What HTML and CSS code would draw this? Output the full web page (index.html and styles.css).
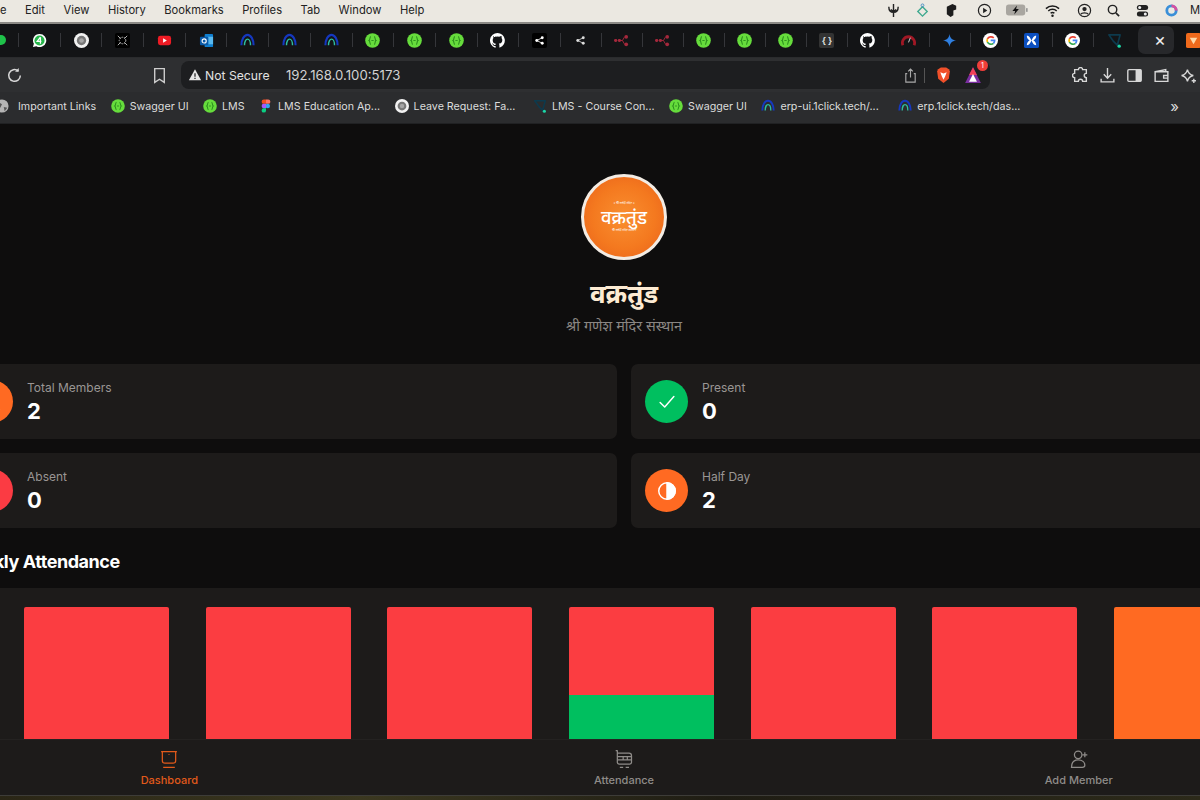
FILE: index.html
```html
<!DOCTYPE html>
<html lang="mr">
<head>
<meta charset="utf-8">
<title>वक्रतुंड</title>
<link rel="stylesheet" href="styles.css">
</head>
<body>
<svg class="defs" width="0" height="0" aria-hidden="true">
  <symbol id="swagger" viewBox="0 0 16 16"><circle cx="8" cy="8" r="7.800" fill="#66dc3c"/><path d="M6.300 3.800C4.700 4.100 5.700 7.300 4.300 8c1.400.7.400 3.900 2 4.200M9.700 3.800c1.600.3.600 3.500 2 4.200-1.400.7-.4 3.900-2 4.200" fill="none" stroke="#2c8f1e" stroke-width="1.200"/><path d="M6.800 8h2.400" stroke="#2c8f1e"/></symbol>
  <symbol id="arc" viewBox="0 0 16 16"><path d="M1.500 13A6.500 11 0 0 1 14.500 13" fill="none" stroke="#1538c0" stroke-width="2.200"/><path d="M4.800 13A3.200 6.500 0 0 1 11.200 13" fill="none" stroke="#2fc0a0" stroke-width="1.500"/></symbol>
  <symbol id="github" viewBox="0 0 16 16"><path fill="#fff" d="M8 0a8 8 0 0 0-2.500 15.600c.4.100.5-.2.500-.4v-1.400c-2.200.5-2.700-1-2.700-1-.4-.9-.9-1.200-.9-1.200-.7-.5.100-.5.100-.5.800.100 1.200.8 1.200.8.700 1.200 1.900.9 2.300.7.100-.5.300-.9.500-1.100-1.800-.2-3.600-.9-3.600-4 0-.9.300-1.600.8-2.100-.1-.2-.4-1 .100-2.100 0 0 .7-.2 2.200.8a7.600 7.600 0 0 1 4 0c1.500-1 2.200-.8 2.200-.8.400 1.100.2 1.900.100 2.100.5.600.8 1.300.8 2.100 0 3.100-1.900 3.700-3.700 3.900.3.300.6.800.6 1.500v2.200c0 .2.100.5.600.4A8 8 0 0 0 8 0z"/></symbol>
  <symbol id="google" viewBox="0 0 16 16"><circle cx="8" cy="8" r="8" fill="#fff"/><path d="M11.500 5.200a4.400 4.400 0 0 0-6.800 1.100" fill="none" stroke="#ea4335" stroke-width="1.800"/><path d="M4.700 6.300a4.400 4.400 0 0 0 0 3.400" fill="none" stroke="#fbbc05" stroke-width="1.800"/><path d="M4.700 9.700a4.400 4.400 0 0 0 6.500 1.400" fill="none" stroke="#34a853" stroke-width="1.800"/><path d="M11.200 11.100A4.400 4.400 0 0 0 12.400 7.800H8.200" fill="none" stroke="#4285f4" stroke-width="1.800"/></symbol>
  <symbol id="share" viewBox="0 0 16 16"><circle cx="4" cy="8" r="2.100"/><circle cx="12" cy="4" r="2.100"/><circle cx="12" cy="12" r="2.100"/><path d="M4 8l8-4M4 8l8 4" stroke="currentColor" stroke-width="1.200" fill="none"/></symbol>
  <symbol id="flow" viewBox="0 0 16 16"><rect x="0" y="6.500" width="3.500" height="3" rx="1.500"/><rect x="4" y="6.500" width="3.500" height="3" rx="1.500"/><path d="M7 8h2l2-3.500M9 8l2 3.500" stroke="currentColor" fill="none"/><circle cx="13" cy="4" r="2"/><circle cx="13" cy="12" r="2"/></symbol>
  <symbol id="gear" viewBox="0 0 16 16"><circle cx="8" cy="8" r="8" fill="#f2f2f2"/><circle cx="8" cy="8" r="5" fill="#777"/><circle cx="8" cy="8" r="2.500" fill="#a5a5a5"/></symbol>
  <symbol id="plan" viewBox="0 0 16 16"><path d="M2 2h12l-3 11-4-4z" fill="none" stroke="#0d3a4d" stroke-width="1.800" stroke-linejoin="round"/><circle cx="13" cy="14" r="1.800" fill="#1cd6a6"/></symbol>
</svg>

<header class="menubar">
  <nav class="menu-left">
    <span class="menu-file">File</span><span>Edit</span><span>View</span><span>History</span><span>Bookmarks</span><span>Profiles</span><span>Tab</span><span>Window</span><span>Help</span>
  </nav>
  <div class="menu-right">
    <svg class="mi" viewBox="0 0 16 16"><path d="M8 1v14M3 4c0 4 2 6 5 6s5-2 5-6M5 7l3 2 3-2" fill="none" stroke="#222" stroke-width="1.500"/></svg>
    <svg class="mi" viewBox="0 0 16 16"><path d="M8 4l5 5-5 5-5-5z" fill="none" stroke="#3fa98f" stroke-width="1.500"/><circle cx="8" cy="2.500" r="1.500" fill="none" stroke="#4b8fc4"/></svg>
    <svg class="mi" viewBox="0 0 16 16"><path d="M3 4l6-3 4 2v4l-3 1v5l-3 2-4-3z" fill="#1d1d1d"/></svg>
    <svg class="mi mi-gap" viewBox="0 0 16 16"><circle cx="8" cy="8" r="6.500" fill="none" stroke="#222" stroke-width="1.300"/><path d="M6.500 5v6l4.500-3z" fill="#222"/></svg>
    <svg class="mi batt" viewBox="0 0 24 12"><rect width="21" height="12" rx="3" fill="#a9a6a0"/><path d="M12 1L7 7h3l-1 4 5-6h-3z" fill="#111"/><rect x="22" y="4" width="1.500" height="4" fill="#888"/></svg>
    <svg class="mi mi-wifi" viewBox="0 0 16 16"><path d="M1 6a10 10 0 0 1 14 0M3.500 8.500a6.500 6.500 0 0 1 9 0M6 11a3 3 0 0 1 4 0" fill="none" stroke="#1a1a1a" stroke-width="1.600"/><circle cx="8" cy="13.500" r="1.300" fill="#1a1a1a"/></svg>
    <svg class="mi" viewBox="0 0 16 16"><circle cx="8" cy="8" r="6.500" fill="none" stroke="#222" stroke-width="1.300"/><circle cx="8" cy="6.500" r="2.300" fill="#222"/><path d="M4 12c1-2 7-2 8 0" stroke="#222" fill="none" stroke-width="1.500"/></svg>
    <svg class="mi" viewBox="0 0 16 16"><circle cx="7" cy="7" r="4.500" fill="none" stroke="#222" stroke-width="1.500"/><path d="M10.500 10.500L14 14" stroke="#222" stroke-width="1.800"/></svg>
    <svg class="mi" viewBox="0 0 16 16"><rect x="2" y="2" width="12" height="5.500" rx="2.700" fill="#222"/><rect x="2" y="9" width="12" height="5.500" rx="2.700" fill="#222"/><circle cx="5" cy="4.700" r="1.600" fill="#eee"/><circle cx="11" cy="11.700" r="1.600" fill="#eee"/></svg>
    <svg class="mi" viewBox="0 0 16 16"><circle cx="8" cy="8" r="5" fill="none" stroke="#3a8fd8" stroke-width="3"/><path d="M8 3a5 5 0 0 1 5 5" fill="none" stroke="#d84fa0" stroke-width="3"/></svg>
    <span class="menu-m">M</span>
  </div>
</header>

<div class="tabstrip">
  <div class="tab tab-first"><span class="green-dot"></span></div>
  <div class="tab"><svg class="fav" viewBox="0 0 16 16"><path d="M8 1a7 7 0 0 0-6 10.500L1 15l3.600-1A7 7 0 1 0 8 1z" fill="#fff"/><circle cx="8" cy="8" r="5.400" fill="#26b64b"/><path d="M9 4.500L5.500 9H10M9 4.500V11.500" stroke="#fff" fill="none" stroke-width="1.300"/></svg></div>
  <div class="tab"><svg class="fav"><use href="#gear"/></svg></div>
  <div class="tab"><svg class="fav" viewBox="0 0 16 16"><rect width="16" height="16" rx="2" fill="#000"/><circle cx="8" cy="8" r="3.500" fill="none" stroke="#ccc" stroke-dasharray="1.500 1"/><path d="M3 3l3 3M13 3l-3 3M3 13l3-3M13 13l-3-3" stroke="#bbb"/></svg></div>
  <div class="tab"><svg class="fav" viewBox="0 0 16 16"><rect x="1" y="3" width="14" height="10" rx="2.500" fill="#ee1b24"/><path d="M6.500 5.700v4.600L10.500 8z" fill="#fff"/></svg></div>
  <div class="tab"><svg class="fav" viewBox="0 0 16 16"><rect x="6" y="1" width="9" height="14" rx="1" fill="#0f7fd0"/><rect x="9" y="4" width="6" height="8" fill="#58b9f0"/><rect x="1" y="4" width="9" height="9" rx="1" fill="#0a5aa8"/><circle cx="5.500" cy="8.500" r="2.200" fill="none" stroke="#fff" stroke-width="1.200"/></svg></div>
  <div class="tab"><svg class="fav"><use href="#arc"/></svg></div>
  <div class="tab"><svg class="fav"><use href="#arc"/></svg></div>
  <div class="tab"><svg class="fav"><use href="#arc"/></svg></div>
  <div class="tab"><svg class="fav"><use href="#swagger"/></svg></div>
  <div class="tab"><svg class="fav"><use href="#swagger"/></svg></div>
  <div class="tab"><svg class="fav"><use href="#swagger"/></svg></div>
  <div class="tab"><svg class="fav"><use href="#github"/></svg></div>
  <div class="tab"><svg class="fav sq-black"><use href="#share"/></svg></div>
  <div class="tab tab-n"><svg class="fav white small"><use href="#share"/></svg></div>
  <div class="tab tab-n"><svg class="fav red"><use href="#flow"/></svg></div>
  <div class="tab tab-n"><svg class="fav red"><use href="#flow"/></svg></div>
  <div class="tab tab-n"><svg class="fav"><use href="#swagger"/></svg></div>
  <div class="tab tab-n"><svg class="fav"><use href="#swagger"/></svg></div>
  <div class="tab tab-n"><svg class="fav"><use href="#swagger"/></svg></div>
  <div class="tab tab-n"><span class="braces">{ }</span></div>
  <div class="tab tab-n"><svg class="fav"><use href="#github"/></svg></div>
  <div class="tab tab-n"><svg class="fav" viewBox="0 0 16 16"><path d="M2 13a6.500 6.500 0 1 1 12 0" fill="none" stroke="#a01825" stroke-width="3"/><path d="M8 10l2-5" stroke="#d9d9d9"/></svg></div>
  <div class="tab tab-n"><svg class="fav" viewBox="0 0 16 16"><path d="M8 1c.5 4 2.500 6.500 7 7-4.500.5-6.500 3-7 7-.5-4-2.500-6.500-7-7 4.500-.5 6.500-3 7-7z" fill="#2f7fe0"/></svg></div>
  <div class="tab tab-n"><svg class="fav"><use href="#google"/></svg></div>
  <div class="tab tab-n"><svg class="fav" viewBox="0 0 16 16"><rect width="16" height="16" rx="2" fill="#0b4fc0"/><path d="M3 3c3 0 4 3 5 5 1-2 2-5 5-5 0 2-1 4-3 5 2 1 3 3 3 5-3 0-4-3-5-5-1 2-2 5-5 5 0-2 1-4 3-5-2-1-3-3-3-5z" fill="#fff"/></svg></div>
  <div class="tab tab-n"><svg class="fav"><use href="#google"/></svg></div>
  <div class="tab tab-n tab-plain"><svg class="fav"><use href="#plan"/></svg></div>
  <div class="tab-active">×</div>
  <div class="tab tab-n tab-plain tab-last"><svg class="fav" viewBox="0 0 16 16"><rect width="16" height="16" rx="2" fill="#f06a1c"/><path d="M4 5h8l-4 7z" fill="#ffd9a8"/></svg></div>
</div>

<div class="toolbar">
  <svg class="tool reload" viewBox="0 0 16 16"><path d="M13.500 8a5.500 5.500 0 1 1-2-4.300" fill="none" stroke="#d8d8d8" stroke-width="1.400"/><path d="M12 1v3.500H8.500z" fill="#d8d8d8"/></svg>
  <svg class="tool bookmark" viewBox="0 0 16 16"><path d="M3.500 1.500h9v13L8 11.500l-4.500 3z" fill="none" stroke="#cfcfcf" stroke-width="1.300"/></svg>
  <div class="address">
    <svg class="warn" viewBox="0 0 16 16"><path d="M8 1.500l7 12.500H1z" fill="#e6e6e6"/><path d="M8 6v4M8 11.200v1.300" stroke="#1e1f21" stroke-width="1.400"/></svg>
    <span class="not-secure">Not Secure</span>
    <span class="url">192.168.0.100:5173</span>
    <svg class="addr-ic share-ic" viewBox="0 0 16 16"><path d="M4.500 6H3v9h10V6h-1.500M8 10V1M5.500 3.500L8 1l2.500 2.500" fill="none" stroke="#a9a9a9" stroke-width="1.200"/></svg>
    <span class="addr-sep"></span>
    <svg class="addr-ic brave" viewBox="0 0 16 16"><path d="M3 2l2.500-1.500h5L13 2l1 2-1 7-5 4-5-4-1-7z" fill="#f0502a"/><path d="M5 5l3 1 3-1-1.500 4L8 12 6.500 9z" fill="#fff"/></svg>
    <span class="rewards">
      <svg class="addr-ic reward-ic" viewBox="0 0 16 16"><path d="M8 1l7 14H1z" fill="#7a2ea0"/><path d="M8 1l3.500 7h-7z" fill="#f0405a"/><path d="M8 7l3.500 7h-7z" fill="#fff"/></svg>
      <span class="badge">1</span>
    </span>
  </div>
  <div class="tool-right">
    <svg class="tool" viewBox="0 0 16 16"><path d="M6 2.500a2 2 0 0 1 4 0h3.500V6a2 2 0 0 0 0 4v3.500H10a2 2 0 0 0-4 0H2.500V10a2 2 0 0 1 0-4V2.500z" fill="none" stroke="#d8d8d8" stroke-width="1.300"/></svg>
    <svg class="tool" viewBox="0 0 16 16"><path d="M8 1v9M4.500 6.800L8 10.500l3.500-3.700M2 11v3h12v-3" fill="none" stroke="#d8d8d8" stroke-width="1.300"/></svg>
    <svg class="tool" viewBox="0 0 16 16"><rect x="1.700" y="2.500" width="12.600" height="11" rx="1" fill="none" stroke="#d8d8d8" stroke-width="1.300"/><rect x="9" y="2.500" width="5.300" height="11" fill="#d8d8d8"/></svg>
    <svg class="tool" viewBox="0 0 16 16"><path d="M2 4.500l10-2v2M2 4.500h12v9H2zM10 8h4v2.500h-4z" fill="none" stroke="#d8d8d8" stroke-width="1.300"/></svg>
    <svg class="tool" viewBox="0 0 16 16"><path d="M7 2.500c.7 3.200 2.200 4.800 5.500 5.500-3.300.7-4.800 2.300-5.500 5.500C6.300 10.300 4.800 8.700 1.500 8 4.800 7.300 6.300 5.700 7 2.500zM13 11v4M11 13h4" fill="none" stroke="#d8d8d8" stroke-width="1.300"/></svg>
  </div>
</div>

<div class="bookmarks">
  <div class="bm bm-globe"><svg class="bm-ic" viewBox="0 0 16 16"><circle cx="8" cy="8" r="7.500" fill="#b5b5b5"/><path d="M3 3l5 3-2 4-3-1zM10 9l4 1-3 4z" fill="#555"/></svg>Important Links</div>
  <div class="bm"><svg class="bm-ic"><use href="#swagger"/></svg>Swagger UI</div>
  <div class="bm"><svg class="bm-ic"><use href="#swagger"/></svg>LMS</div>
  <div class="bm"><svg class="bm-ic" viewBox="0 0 16 16"><circle cx="10" cy="8" r="2.600" fill="#2fa8f0"/><path d="M5 .500h3v5H5.500a2.500 2.500 0 0 1 0-5z" fill="#f24e1e"/><path d="M8 .500h2.500a2.500 2.500 0 0 1 0 5H8z" fill="#ff7262"/><path d="M8 5.500v5H5.500a2.500 2.500 0 0 1 0-5z" fill="#a259ff"/><path d="M8 10.500v2.500a2.500 2.500 0 1 1-2.500-2.500z" fill="#0acf83"/></svg>LMS Education Ap...</div>
  <div class="bm"><svg class="bm-ic"><use href="#gear"/></svg>Leave Request: Fa...</div>
  <div class="bm bm-wide"><svg class="bm-ic"><use href="#plan"/></svg>LMS - Course Con...</div>
  <div class="bm"><svg class="bm-ic"><use href="#swagger"/></svg>Swagger UI</div>
  <div class="bm"><svg class="bm-ic"><use href="#arc"/></svg>erp-ui.1click.tech/...</div>
  <div class="bm bm-last"><svg class="bm-ic"><use href="#arc"/></svg>erp.1click.tech/das...</div>
  <div class="bm-more">»</div>
</div>

<main class="app">
  <section class="brand">
    <div class="logo">
      <span class="logo-small">॥ श्री गणेश मंदिर ॥</span>
      <span class="logo-name">वक्रतुंड</span>
      <span class="logo-small">श्री गणेश मंदिर संस्थान</span>
    </div>
    <h1 class="brand-title">वक्रतुंड</h1>
    <p class="brand-sub">श्री गणेश मंदिर संस्थान</p>
  </section>

  <section class="stats">
    <article class="card">
      <span class="circle orange"><svg class="circle-ic" viewBox="0 0 24 24"><circle cx="12" cy="8" r="4"/><path d="M4 20c1-5 15-5 16 0"/></svg></span>
      <div class="card-text"><p class="card-label">Total Members</p><p class="card-value">2</p></div>
    </article>
    <article class="card">
      <span class="circle green"><svg class="circle-ic" viewBox="0 0 24 24"><path d="M4.500 12.500l5 5L19.500 6"/></svg></span>
      <div class="card-text"><p class="card-label">Present</p><p class="card-value">0</p></div>
    </article>
    <article class="card">
      <span class="circle red"><svg class="circle-ic" viewBox="0 0 24 24"><path d="M7 7l10 10M17 7L7 17"/></svg></span>
      <div class="card-text"><p class="card-label">Absent</p><p class="card-value">0</p></div>
    </article>
    <article class="card">
      <span class="circle orange"><svg class="circle-ic half" viewBox="0 0 24 24"><circle cx="12" cy="12" r="9"/><path class="half-fill" d="M12 3a9 9 0 0 1 0 18z"/></svg></span>
      <div class="card-text"><p class="card-label">Half Day</p><p class="card-value">2</p></div>
    </article>
  </section>

  <h2 class="section-title">Weekly Attendance</h2>

  <section class="chart">
    <div class="bar bar-red"></div>
    <div class="bar bar-red"></div>
    <div class="bar bar-red"></div>
    <div class="bar bar-split"><div class="seg-red"></div><div class="seg-green"></div></div>
    <div class="bar bar-red"></div>
    <div class="bar bar-red"></div>
    <div class="bar bar-orange"></div>
  </section>
</main>

<nav class="bottom-nav">
  <div class="nav-item active">
    <svg class="nav-ic" viewBox="0 0 24 24"><path d="M4 3h16v11a3 3 0 0 1-3 3H7a3 3 0 0 1-3-3zM5 22h14M2.500 3h19M12 6v.8"/></svg>
    <span>Dashboard</span>
  </div>
  <div class="nav-item">
    <svg class="nav-ic" viewBox="0 0 24 24"><path d="M2 2h2.500M4 2v14a2 2 0 0 0 2 2h13a2 2 0 0 0 2-2V8a3 3 0 0 0-3-3H4M4 9h17M4 13h17M11 9v4M16 9v4M7 22h4M14 22h4"/></svg>
    <span>Attendance</span>
  </div>
  <div class="nav-item">
    <svg class="nav-ic" viewBox="0 0 24 24"><circle cx="11" cy="7" r="4.500"/><path d="M3 22c0-6 3-9 8-9s8 3 8 6.500c0 2-1 2.500-3 2.500zM19 4v6M16 7h6"/></svg>
    <span>Add Member</span>
  </div>
</nav>
<div class="wallpaper"></div>
</body>
</html>
```

FILE: styles.css
```css
* { box-sizing: border-box; }
html, body { margin: 0; padding: 0; }
body {
  width: 1200px;
  height: 800px;
  overflow: hidden;
  display: flex;
  flex-direction: column;
  background: #0e0d0d;
  font-family: Inter, "Noto Sans", "Noto Sans Devanagari", "Liberation Sans", sans-serif;
}
.defs { position: absolute; }
p, h1, h2 { margin: 0; }

/* macOS menu bar */
.menubar {
  flex: 0 0 24px;
  display: flex;
  justify-content: space-between;
  align-items: center;
  padding-bottom: 2px;
  background: #ebe8e1;
  border-bottom: 2px solid #8b8985;
  color: #222;
  font-size: 11.2px;
}
.menu-left { display: flex; gap: 18.5px; margin-left: -12px; }
.menu-right { display: flex; align-items: center; gap: 14px; margin-right: 0; }
.mi { width: 15px; height: 15px; }
.mi-gap { margin-left: 4px; }
.mi-wifi { margin-right: 3px; }
.batt { width: 22px; height: 12px; margin-right: 3px; }
.menu-m { width: 10px; margin-left: -3px; overflow: hidden; }

/* Tab strip */
.tabstrip {
  flex: 0 0 33px;
  display: flex;
  align-items: center;
  padding-bottom: 1px;
  background: #131416;
  overflow: hidden;
}
.tab {
  flex: 0 0 41.7px;
  height: 14px;
  display: flex;
  align-items: center;
  justify-content: center;
  border-right: 1px solid #35363a;
}
.tab-first { flex-basis: 36px; margin-left: -17px; }
.tab-n { flex-basis: 41px; }
.tab-plain { border-right: 0; }
.tab-last { flex-basis: 40px; }
.fav { width: 15px; height: 15px; flex: none; }
.green-dot { width: 10px; height: 10px; border-radius: 50%; background: #1fc24a; }
.sq-black { background: #000; border-radius: 2px; color: #fff; fill: #fff; padding: 2px; }
.white { fill: #ddd; color: #ddd; }
.small { width: 11px; height: 11px; }
.red { fill: #a5283c; color: #a5283c; }
.braces {
  width: 15px;
  height: 15px;
  background: #333;
  border-radius: 2px;
  color: #ddd;
  font-size: 9px;
  font-weight: 700;
  line-height: 15px;
  text-align: center;
  white-space: nowrap;
}
.tab-active {
  flex: 0 0 36px;
  height: 28px;
  margin-left: 3px;
  padding-left: 8px;
  border-radius: 7px;
  background: #27282b;
  color: #eee;
  font-size: 18px;
  line-height: 28px;
  text-align: center;
}

/* Browser toolbar */
.toolbar {
  flex: 0 0 35px;
  display: flex;
  align-items: center;
  background: #2e2f31;
  border-top: 1px solid #2a2b2d;
}
.tool { width: 17px; height: 17px; flex: none; }
.reload { margin-left: 6px; }
.bookmark { margin-left: 128px; }
.address {
  width: 809px;
  height: 28px;
  margin-left: 13px;
  display: flex;
  align-items: center;
  background: #1d1e20;
  border-radius: 8px;
  padding-left: 7px;
  color: #e2e2e2;
  font-size: 12.2px;
}
.warn { width: 14px; height: 14px; }
.not-secure { margin-left: 3px; width: 81px; }
.url { flex: 1; color: #d2d2d2; font-size: 13.2px; }
.addr-ic { width: 15px; height: 15px; display: block; }
.share-ic { margin-right: 6px; }
.addr-sep { width: 1px; height: 15px; background: #555; margin-right: 10px; }
.brave { width: 17px; height: 17px; margin-right: 12px; }
.rewards { position: relative; margin-right: 8px; }
.reward-ic { width: 18px; height: 18px; }
.badge {
  position: absolute;
  top: -6px;
  right: -6px;
  width: 11px;
  height: 11px;
  border-radius: 50%;
  background: #ef3e3a;
  color: #fff;
  font-size: 7px;
  line-height: 11px;
  text-align: center;
}
.tool-right { display: flex; gap: 10px; margin-left: 82px; }

/* Bookmarks */
.bookmarks {
  flex: 0 0 32px;
  display: flex;
  align-items: center;
  gap: 14.5px;
  padding-bottom: 3px;
  background: #2b2c2e;
  border-bottom: 1px solid #202123;
  color: #dcdcdc;
  font-size: 10.7px;
  white-space: nowrap;
}
.bm { display: flex; align-items: center; gap: 5px; }
.bm-globe { margin-left: -5px; gap: 9px; }
.bm-wide { margin-left: 3px; }
.bm-last { margin-left: 5px; }
.bm-ic { width: 14px; height: 14px; flex: none; }
.bm-more { margin-left: auto; margin-right: 21px; font-size: 15px; }

/* Application */
.app {
  flex: 1;
  min-height: 0;
  width: 1336px;
  margin-left: -44px;
  overflow: hidden;
  background: #0e0d0d;
}
.brand {
  display: flex;
  flex-direction: column;
  align-items: center;
  padding-top: 50px;
}
.logo {
  width: 86px;
  height: 86px;
  display: flex;
  flex-direction: column;
  align-items: center;
  justify-content: center;
  border: 3px solid #f3ece4;
  border-radius: 50%;
  background: radial-gradient(circle, #f98f30 0%, #f4791f 55%, #e9601a 100%);
  color: #fff;
}
.logo-name { font-size: 18.5px; font-weight: 500; line-height: 22px; }
.logo-small { font-size: 3px; line-height: 5px; }
.brand-title {
  margin-top: 16px;
  color: #fdebd3;
  font-size: 26px;
  font-weight: 700;
  line-height: 36px;
}
.brand-sub {
  margin-top: 4px;
  color: #8a8683;
  font-size: 14.4px;
  line-height: 20px;
}
.stats {
  display: grid;
  grid-template-columns: 1fr 1fr;
  gap: 14px;
  margin-top: 28px;
}
.card {
  height: 75px;
  display: flex;
  align-items: center;
  gap: 14px;
  padding: 0 14px;
  background: #1d1b1a;
  border-radius: 7px;
}
.circle {
  width: 43px;
  height: 43px;
  display: flex;
  align-items: center;
  justify-content: center;
  border-radius: 50%;
}
.orange { background: #ff6a22; }
.green { background: #00bf5f; }
.circle.red { background: #fb3b43; }
.circle-ic {
  width: 22px;
  height: 22px;
  fill: none;
  stroke: #fff;
  stroke-width: 1.600;
  stroke-linecap: round;
  stroke-linejoin: round;
}
.half-fill { fill: #fff; }
.card-text { padding-top: 1px; }
.card-label { color: #9a9694; font-size: 12px; line-height: 16px; }
.card-value { color: #fff; font-size: 22px; font-weight: 700; line-height: 28px; margin-top: 1px; }
.section-title {
  margin-top: 22px;
  color: #fff;
  font-size: 18px;
  font-weight: 700;
  line-height: 24px;
  letter-spacing: -0.025em;
}
.chart {
  height: 200px;
  margin-top: 14px;
  padding: 19px 15px 0 68px;
  display: grid;
  grid-template-columns: repeat(7, 145px);
  column-gap: 36.67px;
  background: #1d1b1a;
  border-radius: 7px 7px 0 0;
}
.bar { height: 200px; border-radius: 2px 2px 0 0; overflow: hidden; }
.bar-red, .seg-red { background: #fb3d41; }
.bar-orange { background: #ff6a22; }
.seg-red { height: 88px; }
.seg-green { height: 112px; background: #00bf5f; }

/* Bottom navigation */
.bottom-nav {
  flex: 0 0 56px;
  width: 1364px;
  margin-left: -58px;
  display: grid;
  grid-template-columns: repeat(3, 1fr);
  background: #1d1b1a;
  border-top: 1px solid #242221;
}
.nav-item {
  display: flex;
  flex-direction: column;
  align-items: center;
  padding-top: 9px;
  gap: 4px;
  color: #8f8c89;
  font-size: 11px;
  font-weight: 500;
  line-height: 15px;
}
.nav-item.active { color: #e15a1b; }
.nav-ic {
  width: 20px;
  height: 20px;
  fill: none;
  stroke: currentColor;
  stroke-width: 1.500;
}

.wallpaper {
  flex: 0 0 5px;
  background: linear-gradient(90deg, #2a2616, #3b3820 30%, #1f1d14 60%, #2c2a1a);
  border-top: 1px solid #3d3c38;
}
```
